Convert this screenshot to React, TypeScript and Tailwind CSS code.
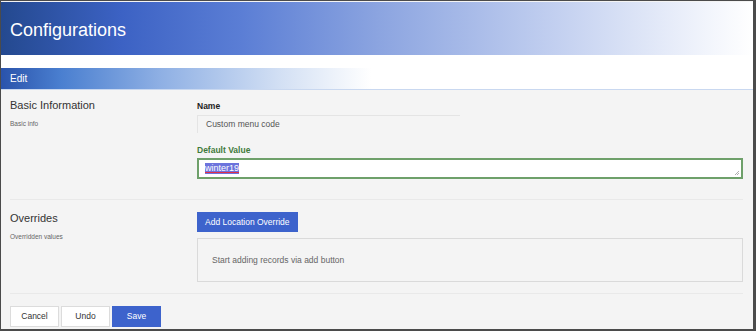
import React from "react";

const FONT = "font-['Liberation_Sans',Arial,sans-serif]";

function SectionLabel({ title, sub }: { title: string; sub: string }) {
  return (
    <div className="w-[187px] shrink-0">
      <div className="text-[11px] leading-[13px] text-[#333]">{title}</div>
      <div className="mt-[8px] text-[6.5px] leading-[8px] text-[#666]">{sub}</div>
    </div>
  );
}

export default function App() {
  return (
    <div
      className={`${FONT} w-[756px] h-[331px] overflow-hidden border-t border-l border-r-[3px] border-b-2 border-[#4b4b4b] bg-[#f4f4f4] flex flex-col`}
    >
      {/* page title */}
      <div className="mt-px h-[53px] shrink-0 flex items-center pl-[9px] pt-[4px] text-[18px] text-white bg-[linear-gradient(to_right,#24498f_0%,#3c62c4_16%,#5b7ed5_32%,#8ba4e0_50%,#c3d0f0_74%,#f2f5fc_94%,#ffffff_100%)]">
        Configurations
      </div>
      <div className="h-[13px] shrink-0 bg-white" />

      {/* edit bar */}
      <div className="h-[22px] shrink-0 flex items-center pl-[9px] text-[10px] text-white border-b border-[#c9d8f0] bg-[linear-gradient(to_right,#2a53ab_0px,#4a7fd0_60px,#8fb0e4_160px,#d3e0f4_280px,#ffffff_370px)]">
        Edit
      </div>

      <div className="flex-1 pl-[9px] pr-[10px]">
        {/* basic information */}
        <div className="flex pt-[9px] pb-[20px] border-b border-[#e9e9e9]">
          <SectionLabel title="Basic Information" sub="Basic info" />
          <div className="flex-1">
            <div className="pt-[2px] text-[8.5px] leading-[10px] font-bold text-[#222]">Name</div>
            <div className="mt-[4px] w-[263px] h-[18px] flex items-center pl-2 border-t border-l border-[#e4e4e4] text-[8.5px] text-[#555]">
              Custom menu code
            </div>
            <div className="mt-[12px] text-[8.5px] leading-[10px] font-bold text-[#3f7a3a]">Default Value</div>
            <div className="relative mt-[3px] h-[21px] flex items-center pl-[6px] bg-white border-2 border-[#6ea06a] text-[9px] text-white">
              <span className="bg-[#6c73dc] leading-[11px] underline decoration-[#e0304a] decoration-1 underline-offset-1">winter19</span>
              <svg className="absolute right-px bottom-px" width="6" height="6" viewBox="0 0 6 6">
                <path d="M5 1 L1 5 M5 3 L3 5" stroke="#9a9a9a" strokeWidth="0.8" />
              </svg>
            </div>
          </div>
        </div>

        {/* overrides */}
        <div className="flex pt-[12px] pb-[11px] border-b border-[#e9e9e9]">
          <SectionLabel title="Overrides" sub="Overridden values" />
          <div className="flex-1">
            <button className="block h-[20px] px-2 bg-[#3d63cc] text-white text-[8.5px]">Add Location Override</button>
            <div className="mt-[6px] h-[44px] flex items-center pl-[14px] border border-[#dadada] text-[8.5px] text-[#666]">
              Start adding records via add button
            </div>
          </div>
        </div>

        {/* actions */}
        <div className="flex gap-[2px] pt-[12px]">
          <button className="w-[49px] h-[21px] bg-white border border-[#dcdcdc] text-[8.5px] text-[#333]">Cancel</button>
          <button className="w-[49px] h-[21px] bg-white border border-[#dcdcdc] text-[8.5px] text-[#333]">Undo</button>
          <button className="w-[49px] h-[21px] bg-[#3d63cc] border border-[#3d63cc] text-[8.5px] text-white">Save</button>
        </div>
      </div>
    </div>
  );
}
